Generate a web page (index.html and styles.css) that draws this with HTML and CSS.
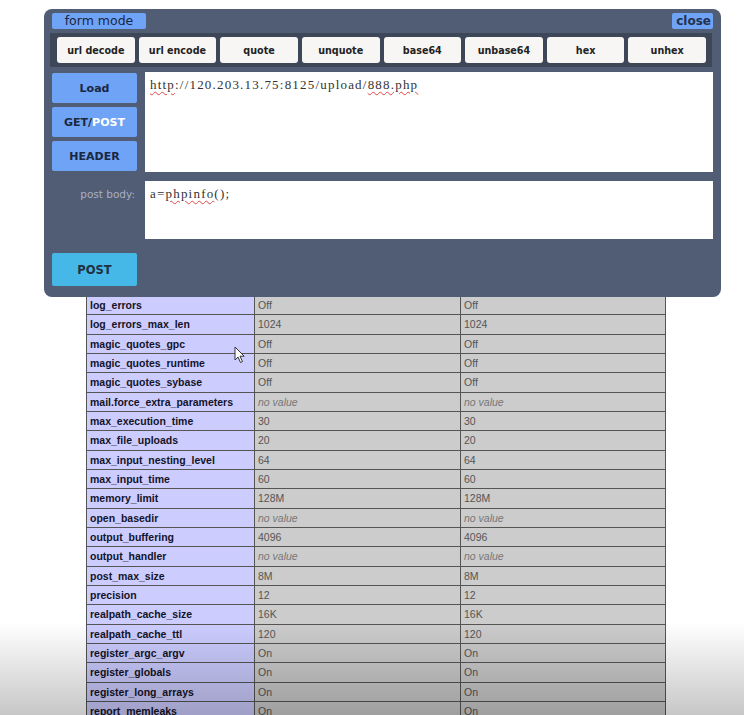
FILE: index.html
```html
<!DOCTYPE html>
<html>
<head>
<meta charset="utf-8">
<link rel="stylesheet" href="styles.css">
</head>
<body>
<div class="page">
  <table class="info">
    <colgroup><col class="c1"><col class="c2"><col class="c3"></colgroup>
    <tr><td class="k">log_errors</td><td class="v">Off</td><td class="v">Off</td></tr>
    <tr><td class="k">log_errors_max_len</td><td class="v">1024</td><td class="v">1024</td></tr>
    <tr><td class="k">magic_quotes_gpc</td><td class="v">Off</td><td class="v">Off</td></tr>
    <tr><td class="k">magic_quotes_runtime</td><td class="v">Off</td><td class="v">Off</td></tr>
    <tr><td class="k">magic_quotes_sybase</td><td class="v">Off</td><td class="v">Off</td></tr>
    <tr><td class="k">mail.force_extra_parameters</td><td class="v"><i>no value</i></td><td class="v"><i>no value</i></td></tr>
    <tr><td class="k">max_execution_time</td><td class="v">30</td><td class="v">30</td></tr>
    <tr><td class="k">max_file_uploads</td><td class="v">20</td><td class="v">20</td></tr>
    <tr><td class="k">max_input_nesting_level</td><td class="v">64</td><td class="v">64</td></tr>
    <tr><td class="k">max_input_time</td><td class="v">60</td><td class="v">60</td></tr>
    <tr><td class="k">memory_limit</td><td class="v">128M</td><td class="v">128M</td></tr>
    <tr><td class="k">open_basedir</td><td class="v"><i>no value</i></td><td class="v"><i>no value</i></td></tr>
    <tr><td class="k">output_buffering</td><td class="v">4096</td><td class="v">4096</td></tr>
    <tr><td class="k">output_handler</td><td class="v"><i>no value</i></td><td class="v"><i>no value</i></td></tr>
    <tr><td class="k">post_max_size</td><td class="v">8M</td><td class="v">8M</td></tr>
    <tr><td class="k">precision</td><td class="v">12</td><td class="v">12</td></tr>
    <tr><td class="k">realpath_cache_size</td><td class="v">16K</td><td class="v">16K</td></tr>
    <tr><td class="k">realpath_cache_ttl</td><td class="v">120</td><td class="v">120</td></tr>
    <tr><td class="k">register_argc_argv</td><td class="v">On</td><td class="v">On</td></tr>
    <tr><td class="k">register_globals</td><td class="v">On</td><td class="v">On</td></tr>
    <tr><td class="k">register_long_arrays</td><td class="v">On</td><td class="v">On</td></tr>
    <tr><td class="k">report_memleaks</td><td class="v">On</td><td class="v">On</td></tr>
  </table>
</div>

<div class="hackbar">
  <div class="bar-head">
    <span class="tab">form mode</span>
    <span class="tab close">close</span>
  </div>
  <div class="tools">
    <button class="tool">url decode</button>
    <button class="tool">url encode</button>
    <button class="tool">quote</button>
    <button class="tool">unquote</button>
    <button class="tool">base64</button>
    <button class="tool">unbase64</button>
    <button class="tool">hex</button>
    <button class="tool">unhex</button>
  </div>
  <div class="row">
    <div class="side">
      <button class="act">Load</button>
      <button class="act">GET/<span class="on">POST</span></button>
      <button class="act">HEADER</button>
    </div>
    <div class="box url"><span class="sp">http</span>://120.203.13.75:8125/upload/<span class="sp">888.php</span></div>
  </div>
  <div class="row">
    <div class="side label">post body:</div>
    <div class="box body">a=<span class="sp">phpinfo</span>();</div>
  </div>
  <div class="row">
    <div class="side"><button class="act post">POST</button></div>
  </div>
</div>

<svg class="cursor" width="12" height="18" viewBox="0 0 12 18"><path d="M1 1 L1 14 L4 11 L6.5 16.5 L8.5 15.6 L6 10.2 L10.2 10.2 Z" fill="#fff" stroke="#333" stroke-width="1" stroke-linejoin="round"/></svg>
<div class="shade"></div>
</body>
</html>
```

FILE: styles.css
```css
html, body {
  margin: 0;
  padding: 0;
  background: #ffffff;
}

.page {
  padding-top: 295px;
  padding-left: 86px;
}

.info {
  border-collapse: collapse;
  width: 579px;
  table-layout: fixed;
  font-family: "Liberation Sans", Arial, sans-serif;
  font-size: 10.5px;
}
.info col.c1 { width: 168px; }
.info col.c2 { width: 206px; }
.info col.c3 { width: 205px; }
.info tr { height: 19.33px; }
.info td {
  border: 1px solid #555;
  padding: 0 3px;
  vertical-align: middle;
  line-height: 12px;
  white-space: nowrap;
  overflow: hidden;
}
.info td.k {
  background: #ccccff;
  font-weight: bold;
  color: #141428;
}
.info td.v {
  background: #cccccc;
  color: #555;
}
.info td.v i { color: #777; }

.hackbar {
  position: fixed;
  left: 44px;
  top: 9px;
  width: 677px;
  height: 288px;
  box-sizing: border-box;
  background: #515c75;
  border-radius: 8px;
  padding: 4px 8px 0 8px;
  display: flex;
  flex-direction: column;
  font-family: "DejaVu Sans", Verdana, sans-serif;
}

.bar-head {
  display: flex;
  justify-content: space-between;
  height: 16px;
}
.tab {
  background: #6fa3f6;
  color: #1a2740;
  font-size: 12.5px;
  line-height: 16px;
  padding: 0 6px;
  border-radius: 2px;
  width: 82px;
  text-align: center;
}
.tab.close {
  width: auto;
  padding: 0 2px 0 4px;
  font-weight: bold;
  color: #24324e;
  font-size: 12px;
}

.tools {
  margin: 4px 1px 0 -2px;
  background: #3e4758;
  padding: 4px 6px 4px 7px;
  display: grid;
  grid-template-columns: repeat(8, 1fr);
  gap: 4px;
}
.tool {
  height: 26px;
  border: none;
  border-radius: 3px;
  background: #f8f6f5;
  color: #222;
  font-family: "DejaVu Sans", Verdana, sans-serif;
  font-weight: bold;
  font-size: 9.6px;
  padding: 0;
}

.row {
  display: flex;
  gap: 8px;
  margin-top: 5px;
}
.row + .row { margin-top: 9px; }
.row:last-child { margin-top: 13px; }

.side {
  width: 85px;
  flex: none;
  display: flex;
  flex-direction: column;
  gap: 4px;
  padding-top: 1px;
}
.act {
  height: 30px;
  border: none;
  border-radius: 2px;
  background: #6fa3f6;
  color: #1a2740;
  font-family: "DejaVu Sans", Verdana, sans-serif;
  font-weight: bold;
  font-size: 11px;
  padding: 0;
}
.act .on { color: #ffffff; }
.act.post {
  height: 33px;
  background: #45b8e8;
  color: #1f3142;
  font-size: 11.5px;
}

.label {
  color: #a9b0c0;
  font-size: 10.5px;
  text-align: right;
  padding-top: 7px;
  padding-right: 2px;
  box-sizing: border-box;
  display: block;
}

.box {
  flex: 1;
  background: #ffffff;
  font-family: "Liberation Serif", "Times New Roman", serif;
  font-size: 13px;
  letter-spacing: 1.2px;
  color: #333;
  padding: 5px 5px;
  box-sizing: border-box;
}
.box.url { height: 100px; }
.box.body { height: 58px; }
.sp {
  text-decoration: underline wavy #e04848;
  text-decoration-thickness: 1px;
  text-underline-offset: 2px;
}

.cursor {
  position: fixed;
  left: 234px;
  top: 346px;
}

.shade {
  position: fixed;
  left: 0;
  right: 0;
  bottom: 0;
  height: 92px;
  pointer-events: none;
  background: linear-gradient(to bottom, rgba(0,0,0,0), rgba(0,0,0,0.22));
}
```
